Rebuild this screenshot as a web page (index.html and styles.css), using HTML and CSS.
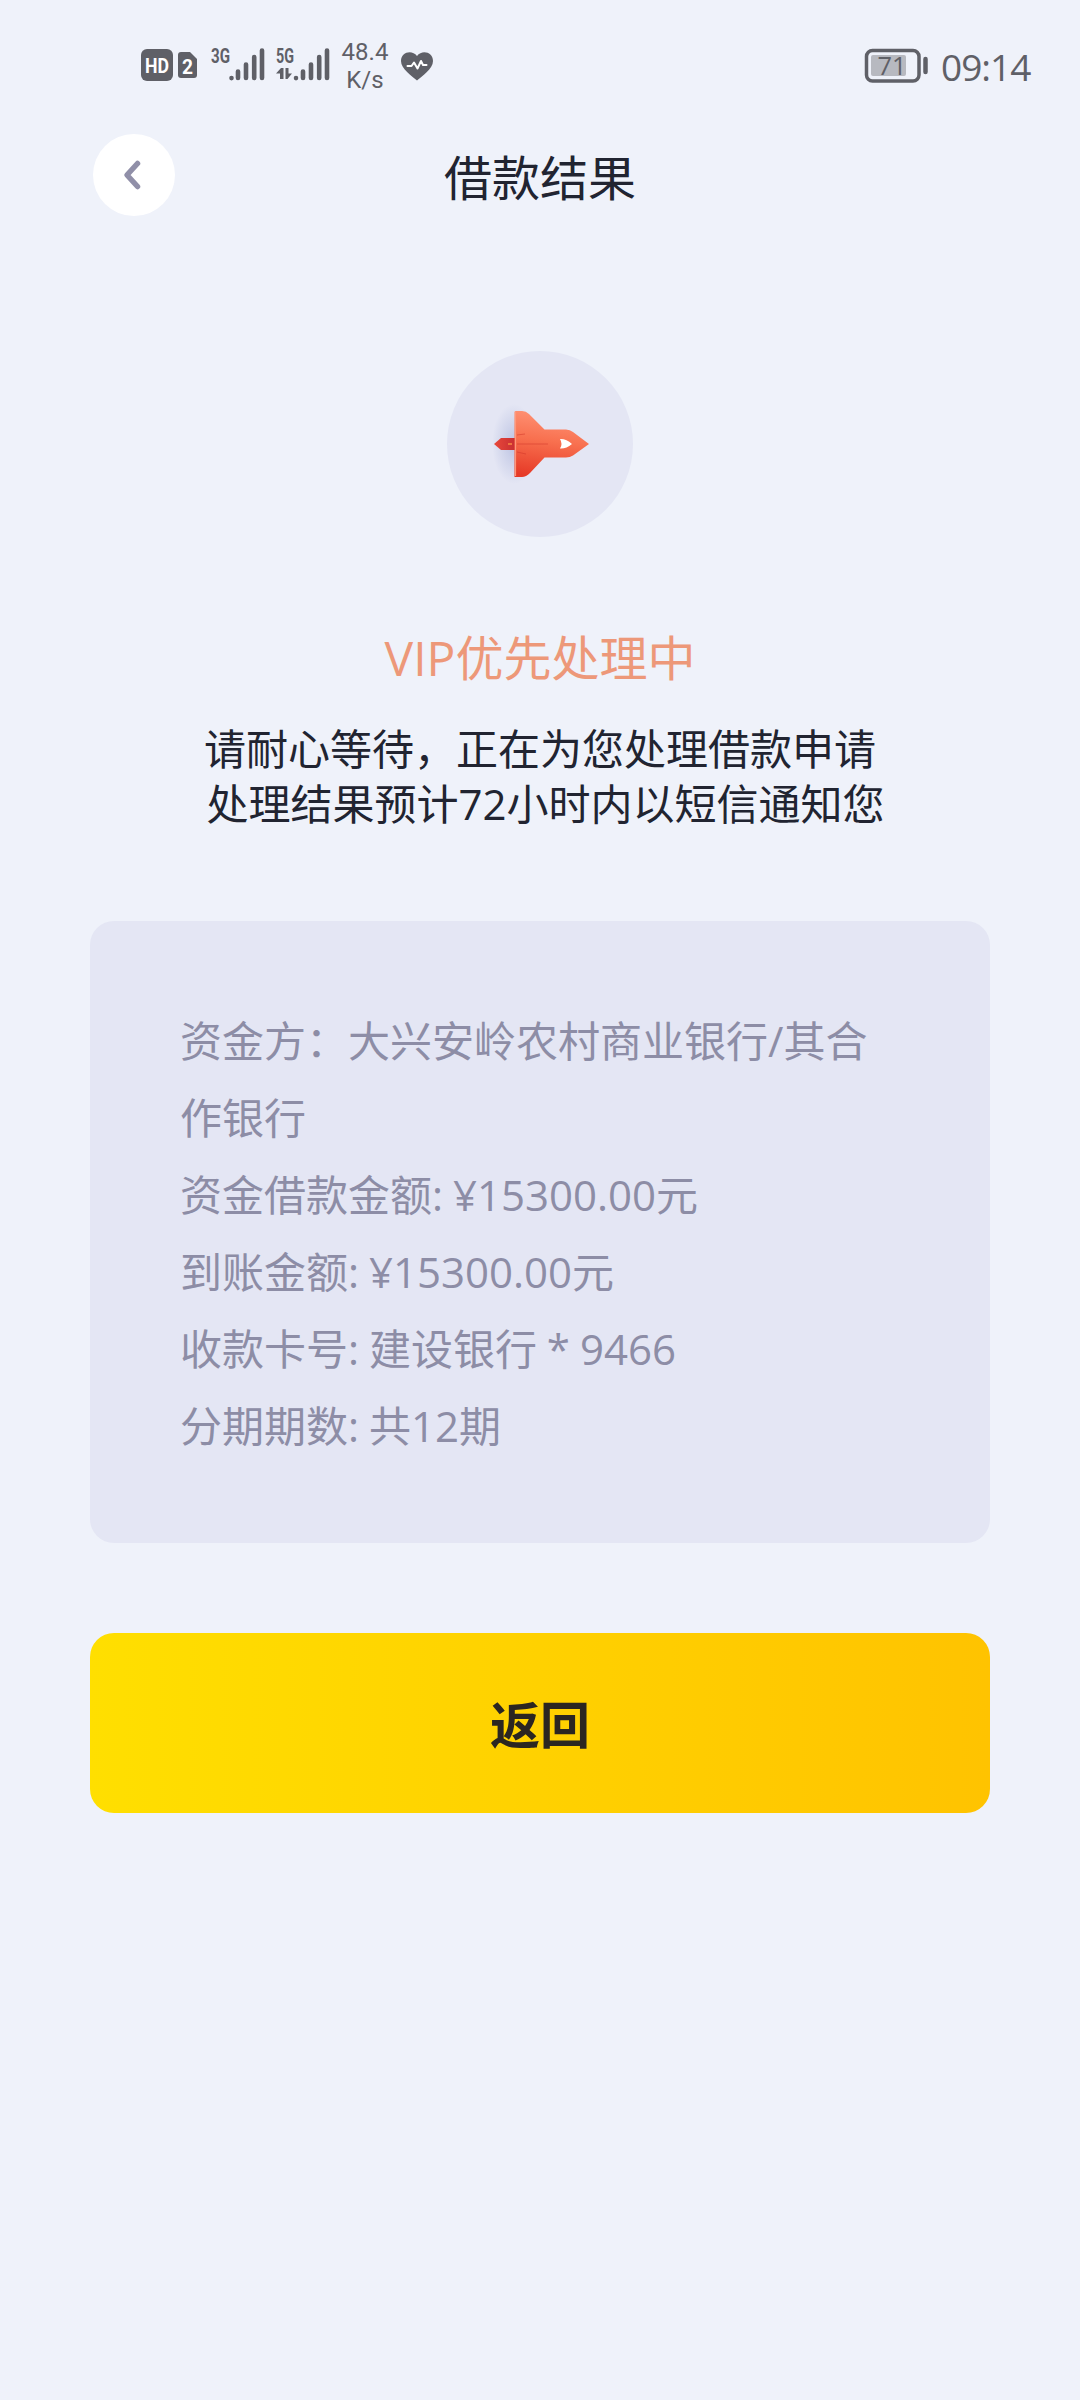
FILE: index.html
```html
<!DOCTYPE html>
<html lang="zh-CN">
<head>
<meta charset="utf-8">
<title>借款结果</title>
<link rel="stylesheet" href="styles.css">
</head>
<body>
<div class="status">
  <div class="status-left">
    <svg class="hd" width="32" height="32" viewBox="0 0 32 32"><rect width="32" height="32" rx="6" fill="#5f6067"/><text x="4" y="23.5" textLength="24" lengthAdjust="spacingAndGlyphs" class="icon-text light">HD</text></svg>
    <svg class="sim" width="19" height="26" viewBox="0 0 19 26"><path d="M3 0H12L19 7V23Q19 26 16 26H3Q0 26 0 23V3Q0 0 3 0Z" fill="#5f6067"/><text x="4" y="21.5" textLength="11" lengthAdjust="spacingAndGlyphs" class="icon-text light">2</text></svg>
    <svg class="signal" width="54" height="36" viewBox="0 0 54 36"><text x="0" y="16.5" textLength="19" lengthAdjust="spacingAndGlyphs" class="icon-text net">3G</text><path d="M20.5 32v.1M27 25.500V32M35 18.500V32M43.200 11V32M51 4.500V32" class="bars"/></svg>
    <svg class="signal5" width="54" height="36" viewBox="0 0 54 36"><text x="0" y="16.5" textLength="18" lengthAdjust="spacingAndGlyphs" class="icon-text net">5G</text><path d="M20 32v.1M27 25.500V32M35 18.500V32M43.200 11V32M51 4.500V32" class="bars"/><path d="M0 27.500L5 22H7.500V33H4V27.500ZM9.500 22H12.500V27.500H16L11.500 33H9.500Z" fill="#5f6067"/></svg>
    <div class="speed"><span>48.4</span><span>K/s</span></div>
    <svg class="heart" width="34" height="30" viewBox="0 0 34 30"><path d="M17 29.500C12 25 1 18 1 10C1 1 12-1.500 17 5C22-1.500 33 1 33 10C33 18 22 25 17 29.500Z" fill="#5f6067"/><path d="M7.500 15H11.500L14 11.500L17.500 17.500L21 10L23 14H26.500" fill="none" stroke="#fff" stroke-width="2" stroke-linejoin="round" stroke-linecap="round"/></svg>
  </div>
  <div class="status-right">
    <svg width="64" height="34" viewBox="0 0 64 34"><rect x="1.500" y="1.500" width="52.500" height="30.500" rx="6" fill="none" stroke="#5f6067" stroke-width="3.500"/><rect x="6" y="6" width="35" height="21" rx="2" fill="#b7b9c0"/><text x="12.500" y="26" textLength="29" lengthAdjust="spacingAndGlyphs" class="icon-text charge">71</text><path d="M60.500 10V23" stroke="#5f6067" stroke-width="4.500" stroke-linecap="round"/></svg>
    <span class="clock">09:14</span>
  </div>
</div>
<header class="header">
  <button class="back" aria-label="返回"><svg width="82" height="82" viewBox="0 0 82 82"><path d="M44.500 29.500L34 41L44.500 52.500" fill="none" stroke="#908fa8" stroke-width="5.500" stroke-linecap="round" stroke-linejoin="round"/></svg></button>
  <h1 class="title">借款结果</h1>
</header>
<main class="main">
  <div class="badge">
    <svg width="186" height="186" viewBox="0 0 186 186">
      <defs>
        <linearGradient id="hull" x1="0.500" y1="0" x2="0.350" y2="1"><stop offset="0" stop-color="#ff9376"/><stop offset=".45" stop-color="#f8704f"/><stop offset="1" stop-color="#e63a27"/></linearGradient>
        <linearGradient id="tail" x1="0" x2="1"><stop offset="0" stop-color="#e8483a"/><stop offset="1" stop-color="#c92f32"/></linearGradient>
        <radialGradient id="glow"><stop offset="0" stop-color="#8290c8" stop-opacity=".4"/><stop offset="1" stop-color="#8290c8" stop-opacity="0"/></radialGradient>
      </defs>
      <ellipse cx="67" cy="93" rx="22" ry="40" fill="url(#glow)"/>
      <path d="M47 93L54 87H68V99H54Z" fill="url(#tail)"/>
      <path d="M61 93H65" stroke="#f98a43" stroke-width="1.500"/>
      <path d="M67.500 61Q67.500 60 69 60H75Q79 60 82 63L97.500 78.500H119Q123 78.500 126 81L142 93L126 104.500Q123 106.500 119 106.500H97.500L83 122Q79 126 75 126H67.500Z" fill="url(#hull)"/>
      <path d="M68.500 61V125" stroke="#ff987a" stroke-width="1.200"/>
      <path d="M70 93H101M70 84L78 83M70 101L79 103" stroke="#cf3328" stroke-opacity=".5" fill="none"/>
      <path d="M113 88Q119 87.500 125 93Q119 98 113 97.500Q116 93 113 88Z" fill="#fff"/>
    </svg>
  </div>
  <h2 class="state">VIP优先处理中</h2>
  <p class="desc">请耐心等待，正在为您处理借款申请<br>&nbsp;处理结果预计72小时内以短信通知您</p>
  <section class="card">
    <p>资金方：大兴安岭农村商业银行/其合<br>作银行</p>
    <p>资金借款金额: ¥15300.00元</p>
    <p>到账金额: ¥15300.00元</p>
    <p>收款卡号: 建设银行 * 9466</p>
    <p>分期期数: 共12期</p>
  </section>
  <button class="submit">返回</button>
</main>
</body>
</html>
```
FILE: styles.css
```css
* { box-sizing: border-box; margin: 0; padding: 0; }
body {
  width: 1080px;
  height: 2400px;
  background: #eff2fa;
  color: #212431;
  font-family: "Open Sans", "Noto Sans CJK SC", sans-serif;
  overflow: hidden;
}
svg { display: block; flex: none; overflow: visible; }
button { border: 0; font-family: inherit; }

.status {
  display: flex;
  justify-content: space-between;
  height: 134px;
  padding: 0 47px 0 141px;
  color: #5f6067;
}
.status-left { display: flex; align-items: flex-start; }
.hd { margin-top: 49px; }
.sim { margin: 52px 0 0 5px; }
.signal { margin: 46px 0 0 14px; }
.signal5 { margin: 46px 0 0 11px; }
.speed {
  display: flex;
  flex-direction: column;
  align-items: center;
  width: 48px;
  margin: 38px 0 0 11px;
  font: 400 24px/28px Roboto, sans-serif;
}
.heart { margin: 51px 0 0 11px; }
.icon-text { font-family: Roboto, sans-serif; font-weight: 700; fill: #5f6067; }
.light { fill: #fff; font-size: 21px; }
.net { font-size: 21px; }
.charge { font: 400 25px "Open Sans", sans-serif; }
.bars { fill: none; stroke: #5f6067; stroke-width: 4.600px; stroke-linecap: round; }
.status-right { display: flex; gap: 12px; padding-top: 49px; }
.clock { width: 92px; font-size: 37px; line-height: 35px; letter-spacing: -1px; white-space: nowrap; }

.header {
  display: grid;
  grid-template-columns: 82px 1fr 82px;
  align-items: start;
  height: 82px;
  padding: 0 93px;
}
.back { width: 82px; height: 82px; border-radius: 50%; background: #fff; }
.title { padding-top: 3px; font-size: 48px; font-weight: 400; line-height: 82px; text-align: center; }

.main {
  display: flex;
  flex-direction: column;
  align-items: center;
  padding: 135px 90px 0;
}
.badge { width: 186px; height: 186px; border-radius: 50%; background: #e4e6f4; }
.state {
  margin-top: 86px;
  color: #ed9879;
  font-size: 48px;
  font-weight: 400;
  line-height: 70px;
}
.desc { margin-top: 28px; font-size: 42px; line-height: 55px; text-align: center; white-space: nowrap; }
.card {
  width: 900px;
  height: 622px;
  margin-top: 90px;
  padding: 81px 90px;
  border-radius: 24px;
  background: #e4e6f4;
  color: #8d8da6;
  font-size: 42px;
  line-height: 77px;
  word-spacing: -1px;
  white-space: nowrap;
}
.submit {
  width: 900px;
  height: 180px;
  margin-top: 90px;
  padding-top: 5px;
  border-radius: 24px;
  background: linear-gradient(90deg, #ffdf00, #ffc300);
  color: #2b2621;
  font-size: 50px;
  font-weight: 700;
  line-height: 175px;
}
```
